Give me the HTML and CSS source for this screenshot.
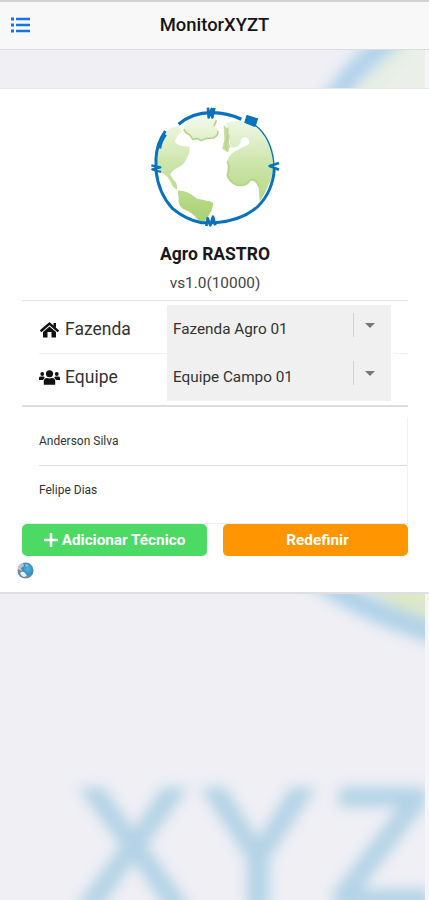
FILE: index.html
```html
<!DOCTYPE html>
<html lang="pt-BR">
<head>
<meta charset="utf-8">
<title>MonitorXYZT</title>
<link rel="stylesheet" href="styles.css">
</head>
<body>
<svg class="backdrop" viewBox="0 0 425 900" width="425" height="900" aria-hidden="true">
  <defs><filter id="soft" x="-20%" y="-20%" width="140%" height="140%"><feGaussianBlur stdDeviation="6.5"/></filter></defs>
  <g filter="url(#soft)">
    <path d="M330 98 Q350 60 386 44 L440 35 V105 Z" fill="#ebefe9"/>
    <path d="M329 109 Q346 73 395 36" fill="none" stroke="#b0d2eb" stroke-width="21"/>
    <path d="M365 105 Q377 73 409 49" fill="none" stroke="#e2ede1" stroke-width="9"/>
    <path d="M362 580 L445 580 V632 Q398 616 362 580Z" fill="#dce8c8"/>
    <path d="M312 574 Q370 616 450 637" fill="none" stroke="#b0d2e9" stroke-width="22"/>
    <g class="letters"><text x="133" y="905">X</text><text x="258" y="905">Y</text><text x="382" y="905">Z</text></g>
  </g>
</svg>
<header class="navbar">
  <svg class="menu" viewBox="0 0 20 16" width="20" height="16" aria-label="Menu"><path d="M0 .5h3v3H0zm5 .3h14v2.4H5zM0 6.5h3v3H0zm5 .3h14v2.4H5zM0 12.5h3v3H0zm5 .3h14v2.4H5z" fill="#1673e6"/></svg>
  <h1>MonitorXYZT</h1>
</header>
<main class="card">
  <svg class="globe" viewBox="0 0 450 420" width="150" height="140" aria-hidden="true">
    <defs><linearGradient id="land" x1="0" y1="60" x2="0" y2="380" gradientUnits="userSpaceOnUse"><stop offset="0" stop-color="#f4faed"/><stop offset=".45" stop-color="#cde5ac"/><stop offset="1" stop-color="#a8d16f"/></linearGradient></defs>
    <g fill="url(#land)">
      <path d="M78 110Q98 91 121 94L124 110Q111 122 105 136Q104 148 124 152L148 155Q151 170 143 183Q136 207 116 217Q96 225 91 239L101 256Q113 263 111 283Q98 279 92 260Q80 239 61 232Q48 210 51 181Q56 137 78 110Z"/>
      <path d="M131 99L144 76Q172 55 201 58Q218 58 231 76L222 94Q235 100 234 118L220 130L200 131L183 138L172 132L158 134L150 120L134 113Z"/>
      <path d="M251 91Q261 94 263 114Q273 117 270 130Q263 145 272 154L262 172L247 161L253 133Z" fill="#c6df9d"/>
      <path d="M258 84Q309 68 343 91Q392 125 402 180Q406 250 359 320L356 278Q344 252 331 258Q321 279 290 273Q263 260 259 241Q266 214 260 200Q270 171 300 161L326 148Q331 132 316 126Q300 127 302 144Q288 161 274 157Q266 141 270 123Z"/>
      <path d="M113 287Q127 286 142 292Q157 300 171 311Q191 313 203 318Q222 318 219 332L213 350Q201 370 189 385L174 375Q160 352 129 342Q113 330 116 308Z"/>
    </g>
    <path d="M132 102Q134 113 150 120L158 133L172 130L183 137L200 130L220 129Q237 120 233 107M222 94L229 76" fill="none" stroke="#b5d588" stroke-width="5"/>
    <path d="M262 98Q266 125 256 155L265 169M262 199Q272 219 263 240Q271 265 293 270Q318 274 329 256Q347 245 358 276" fill="none" stroke="#b5d588" stroke-width="5"/>
    <g fill="none" stroke="#0872bd" stroke-linejoin="round">
      <path d="M116 88Q156 53 213 53Q260 52 304 73" stroke-width="10"/>
      <path d="M76 108Q50 145 48 190L48 226Q55 294 98 341Q137 374 184 383L225 383Q307 377 355 333Q398 289 403 222" stroke-width="9"/>
      <path d="M344 89Q394 127 402 207" stroke-width="4"/>
      <path d="M58 160Q62 136 76 118" stroke-width="11"/>
      <path d="M204 38L206 67L215 42L217 67L223 39" stroke-width="8"/>
      <path d="M199 393L203 370L211 391L219 365L226 391" stroke-width="8"/>
      <path d="M34 211L61 217L37 223L63 231" stroke-width="7"/>
      <path d="M417 204L389 213L417 224" stroke-width="8"/>
    </g>
    <path d="M321 62L352 72L345 94L315 82Z" fill="#0872bd" stroke="#0872bd" stroke-width="4" stroke-linejoin="round"/>
  </svg>
  <h2>Agro RASTRO</h2>
  <p class="version">vs1.0(10000)</p>
  <section class="fields">
    <div class="field">
      <div class="label"><svg viewBox="0 0 20 17" width="20" height="17"><path d="M2 9.5L10 2.5L18 9.5" fill="none" stroke="#111" stroke-width="2.4" stroke-linecap="square"/><path d="M14 2h2.5v5L14 5zM10 5.5l6.5 5.6V16.5H12V11H8v5.500H3.500V11.100z" fill="#111"/></svg><span>Fazenda</span></div>
      <div class="select"><span>Fazenda Agro 01</span><i></i><b></b></div>
    </div>
    <div class="field">
      <div class="label"><svg viewBox="0 0 22 17" width="22" height="17" fill="#111"><circle cx="11" cy="4.500" r="3.700"/><circle cx="3.400" cy="4.800" r="2"/><circle cx="18.600" cy="4.800" r="2"/><path d="M0 10.500V9Q0 7.500 2 7.500H4.500Q5.700 7.500 6 8.500L4.200 11H0zM22 10.500V9Q22 7.500 20 7.500H17.500Q16.300 7.500 16 8.500L17.800 11H22zM5 16V12.500Q5 9 8.500 9Q11 10 13.500 9Q17 9 17 12.500V16z"/></svg><span>Equipe</span></div>
      <div class="select"><span>Equipe Campo 01</span><i></i><b></b></div>
      <div class="tail"></div>
    </div>
  </section>
  <ul class="people"><li>Anderson Silva</li><li>Felipe Dias</li></ul>
  <div class="actions">
    <button class="add"><svg viewBox="0 0 14 14" width="14" height="14"><path d="M7 1v12M1 7h12" stroke="#fff" stroke-width="2.600" stroke-linecap="round"/></svg>Adicionar Técnico</button>
    <button class="reset">Redefinir</button>
  </div>
  <svg class="badge" viewBox="0 0 17 17" width="17" height="17" aria-hidden="true"><defs><radialGradient id="sea" cx=".65" cy=".4"><stop offset="0" stop-color="#51b5e1"/><stop offset=".65" stop-color="#398fc0"/><stop offset="1" stop-color="#71899b"/></radialGradient></defs><circle cx="8.500" cy="8.500" r="8" fill="url(#sea)"/><path d="M2 3L6 1L7 4L4 6L5 9L2 8L.5 7z" fill="#b9c3c8"/><path d="M3 11Q6 8 8 11L10 14L7 15Q4 14 3 11z" fill="#e5f0f5"/><path d="M8 2L12 3L9 5z" fill="#83ccec"/></svg>
</main>
</body>
</html>
```
FILE: styles.css
```css
* { box-sizing: border-box; }
body {
  margin: 0;
  width: 429px;
  height: 900px;
  overflow: hidden;
  position: relative;
  background: linear-gradient(90deg, #efeff4 425px, #f5f5f9 425px);
  font-family: Roboto, "Liberation Sans", sans-serif;
  color: #333;
}
.backdrop { position: absolute; left: 0; top: 0; z-index: -1; }
.letters {
  font: 165px "Liberation Sans", sans-serif;
  text-anchor: middle;
  fill: #b4d3e6;
  stroke: #b4d3e6;
  stroke-width: 7px;
}
.navbar {
  height: 50px;
  background: #f8f8f8;
  border-top: 2px solid #d2d2d2;
  border-bottom: 1px solid #dcdcde;
  display: grid;
  grid-template-columns: 38px 1fr 38px;
  align-items: center;
  padding: 0 0 1px;
}
.menu { margin-left: 11px; }
h1 { margin: 0; text-align: center; font-size: 18.4px; font-weight: 500; line-height: 24px; color: #151515; }
.card {
  margin-top: 38px;
  height: 506px;
  background: #fff;
  border-top: 1px solid #e8e8ea;
  border-bottom: 2px solid #dfdfe2;
  padding: 6px 21px 0 22px;
  display: flex;
  flex-direction: column;
}
.globe { margin-left: 118px; flex: none; }
h2 { margin: 9px 0 0; text-align: center; font-size: 17.5px; line-height: 20px; font-weight: 700; color: #191919; }
.version { margin: 9px 0 0; text-align: center; font-size: 15.4px; line-height: 20px; color: #444; }
.fields { height: 107px; margin-top: 7px; border-top: 1px solid #e3e3e3; border-bottom: 2px solid #ddd; padding-top: 4px; }
.field { display: flex; height: 48px; padding-left: 17px; }
.field + .field .label, .tail { border-top: 1px solid #f1f1f1; }
.tail { flex: 1; margin-left: 3px; }
.label { width: 128px; display: flex; align-items: center; gap: 5px; font-size: 17.5px; }
.field + .field .label { padding-bottom: 1px; }
.label svg { width: 21px; flex: none; }
.select {
  width: 224px;
  background: #f0f0f0;
  display: flex;
  align-items: center;
  padding: 0 15px 0 6px;
  font-size: 15.3px;
}
.select span { width: 180px; flex: none; }
.select i { width: 1px; height: 24px; background: #d3d3d3; margin-top: -8px; }
.select b { margin: -7px 0 0 11px; border: 5.5px solid transparent; border-top-color: #777; border-bottom: 0; }
.people { margin: 10px 0 0; padding: 0; list-style: none; height: 107px; border-right: 1px solid #f1f1f1; border-bottom: 1px solid #ededed; font-size: 12px; }
.people li { height: 48px; margin-left: 17px; line-height: 48px; }
.people li:first-child { height: 49px; border-bottom: 1px solid #ddd; }
.actions { display: grid; grid-template-columns: 1fr 1fr; gap: 16px; }
button { height: 32px; border: 0; padding: 0; border-radius: 5px; color: #fff; font: 700 15.3px/32px Roboto, sans-serif; display: flex; align-items: center; justify-content: center; gap: 4px; }
.add { background: #4cd964; }
.reset { background: #ff9500; padding-left: 4px; }
.badge { margin: 6px 0 0 -5px; flex: none; }
```
